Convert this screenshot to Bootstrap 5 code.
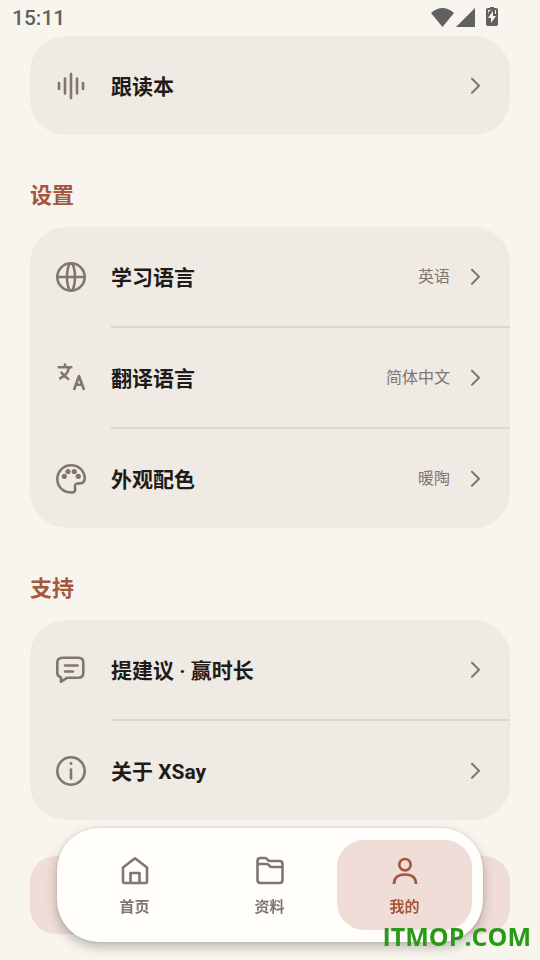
<!DOCTYPE html>
<html lang="zh-CN" class="h-100">
<head>
<meta charset="utf-8">
<meta name="viewport" content="width=device-width, initial-scale=1">
<title>XSay</title>
<link href="https://cdn.jsdelivr.net/npm/bootstrap@5.3.0/dist/css/bootstrap.min.css" rel="stylesheet">
<style>
  body {
    background: #f8f5ee;
    color: #1f1b19;
    font-family: Roboto, "Noto Sans CJK SC", sans-serif;
    padding-bottom: 26px;
  }
  svg { display: block; flex: none; }
  .line-icon { fill: none; stroke: currentColor; stroke-width: 2.6; stroke-linecap: round; stroke-linejoin: round; }
  .chevron { stroke-width: 2; }
  .status-bar { height: 36px; padding: 0 40px 0 12px; color: #616060; }
  .clock { font-size: 21px; line-height: 36px; font-weight: 500; }
  .page { padding: 0 30px; }
  .panel { background: #efeae4; border-radius: 36px; overflow: hidden; }
  .section-title { color: #a5573d; font-size: 22px; line-height: 32px; font-weight: 700; margin: 45px 0 15px; }
  .entry { height: 99px; padding: 0 30px 0 26px; color: #80756f; text-decoration: none; }
  .entry-name { margin-left: 24px; padding-top: 2px; color: #1f1b19; font-size: 21px; line-height: 32px; font-weight: 700; }
  .entry-value { font-size: 16px; line-height: 24px; padding-top: 1px; margin-right: 20px; }
  .divider { margin: 0 0 0 81px; border-top: 2px solid #ddd5cf; opacity: 1; }
  .logout { height: 78px; margin-top: 36px; border: 0; border-radius: 26px; background: #f1ddd7; }
  .tab-bar { margin: 0 57px 18px; padding: 12px 11px 12px 10px; border-radius: 42px; background: #fffefa; box-shadow: 0 5px 12px rgba(0,0,0,.26), 0 0 3px rgba(0,0,0,.12); }
  .tab { flex: 1 1 0; height: 90px; gap: 10px; padding-top: 15px; border-radius: 27px; color: #80756f; font-size: 15px; line-height: 24px; font-weight: 700; text-decoration: none; }
  .tab.active { background: #f1ddd7; color: #a5573d; }
  .watermark { position: fixed; right: 9px; bottom: 7px; z-index: 1040; color: #299a16; font: 700 25px/34px "Open Sans", sans-serif; }
</style>
<script src="https://cdn.jsdelivr.net/npm/bootstrap@5.3.0/dist/js/bootstrap.bundle.min.js"></script>
</head>
<body class="min-vh-100">
<svg class="d-none" aria-hidden="true">
  <symbol id="chevron" viewBox="0 0 10 18"><path d="M2 1.700l7 7-7 7"/></symbol>
</svg>

<header class="status-bar d-flex align-items-center justify-content-between">
  <span class="clock">15:11</span>
  <svg width="70" height="36" viewBox="0 0 70 36" fill="currentColor" aria-hidden="true">
    <path d="M1 13Q12.500 3 24 13L12.500 27Z"/>
    <path d="M45 8V27H26Z"/>
    <path fill-rule="evenodd" d="M58 8h2V7h4v1h2q2 0 2 2v14q0 2-2 2h-8q-2 0-2-2V10q0-2 2-2zM63 11l-5 7h3v5l5-7h-3zM58 10v4l1-3 3-1zM65 10v4h1v-4z"/>
  </svg>
</header>

<main class="page">
  <section class="panel">
    <a class="entry d-flex align-items-center" href="#">
      <svg class="line-icon" width="31" height="31" viewBox="0 0 31 31"><path d="M3 13v6M9 8.500v15M15 4v24M21 8.500v15M27 13v6"/></svg>
      <span class="entry-name me-auto">跟读本</span>
      <svg class="line-icon chevron" width="10" height="18"><use href="#chevron"/></svg>
    </a>
  </section>

  <h2 class="section-title">设置</h2>
  <section class="panel">
    <a class="entry d-flex align-items-center" href="#">
      <svg class="line-icon" width="31" height="31" viewBox="0 0 31 31"><circle cx="15" cy="16" r="13.700"/><ellipse cx="15" cy="16" rx="4" ry="13.700"/><path d="M1.500 16h27"/></svg>
      <span class="entry-name me-auto">学习语言</span>
      <span class="entry-value">英语</span>
      <svg class="line-icon chevron" width="10" height="18"><use href="#chevron"/></svg>
    </a>
    <hr class="divider">
    <a class="entry d-flex align-items-center" href="#">
      <svg class="line-icon" width="31" height="31" viewBox="0 0 31 31"><path d="M2.700 5.300h12.600M9 2.500v2.800M13 5.800C12 10.500 8.500 14.500 4.200 16.300M5.500 10.700c2 2.500 4 4.500 6.800 6.300M18.300 27l4.700-13 4.700 13M20 22.800h6"/></svg>
      <span class="entry-name me-auto">翻译语言</span>
      <span class="entry-value">简体中文</span>
      <svg class="line-icon chevron" width="10" height="18"><use href="#chevron"/></svg>
    </a>
    <hr class="divider">
    <a class="entry d-flex align-items-center" href="#">
      <svg class="line-icon" width="31" height="31" viewBox="0 0 31 31"><path d="M15 2.300C7.400 2.300 1.300 8.400 1.300 16c0 7.500 5.500 13.500 14.700 13.500 2.500 0 3.600-1.600 3.100-4.200-.7-3.800.1-4.800 3.900-4.900 3.800 0 5.700-1.300 5.700-5C28.700 8 23 2.300 15 2.300z"/><g fill="currentColor" stroke="none"><circle cx="8.300" cy="13.300" r="2.600"/><circle cx="12" cy="8.500" r="2.600"/><circle cx="18.300" cy="8.500" r="2.600"/><circle cx="22.300" cy="13.300" r="2.600"/></g></svg>
      <span class="entry-name me-auto">外观配色</span>
      <span class="entry-value">暖陶</span>
      <svg class="line-icon chevron" width="10" height="18"><use href="#chevron"/></svg>
    </a>
  </section>

  <h2 class="section-title">支持</h2>
  <section class="panel">
    <a class="entry d-flex align-items-center" href="#">
      <svg class="line-icon" width="31" height="31" viewBox="0 0 31 31"><path d="M6.500 3.800h15.800q5 0 5 5v9.900q0 5-5 5H11.500L5 27.700V23.500Q1.300 22.300 1.300 18.500V8.800q0-5 5.200-5zM9 11.500h12.500M9 17.500h8"/></svg>
      <span class="entry-name me-auto">提建议 · 赢时长</span>
      <svg class="line-icon chevron" width="10" height="18"><use href="#chevron"/></svg>
    </a>
    <hr class="divider">
    <a class="entry d-flex align-items-center" href="#">
      <svg class="line-icon" width="31" height="31" viewBox="0 0 31 31"><circle cx="15" cy="16" r="13.700"/><path d="M15 14.500v9"/><circle cx="15" cy="8.500" r="1.400" fill="currentColor" stroke="none"/></svg>
      <span class="entry-name me-auto">关于 XSay</span>
      <svg class="line-icon chevron" width="10" height="18"><use href="#chevron"/></svg>
    </a>
  </section>

  <button class="logout d-block w-100" type="button"></button>
</main>

<nav class="tab-bar fixed-bottom d-flex">
  <a class="tab d-flex flex-column align-items-center" href="#">
    <svg class="line-icon" width="30" height="30" viewBox="0 0 30 30"><path d="M3 12.500L15 3.300l12 9.200V26.500q0 1.500-1.500 1.500h-21Q3 28 3 26.500zM10.500 28V18h9v10"/></svg>
    <span>首页</span>
  </a>
  <a class="tab d-flex flex-column align-items-center" href="#">
    <svg class="line-icon" width="30" height="30" viewBox="0 0 30 30"><path d="M2.500 25V6Q2.500 3 5.500 3H10q1.500 0 2.300 1.300Q13.200 6 15 6h9.500q3 0 3 3v16q0 3-3 3h-19q-3 0-3-3zM2.500 9H12q1.200 0 2 1.300Q15 12 16.500 12h11"/></svg>
    <span>资料</span>
  </a>
  <a class="tab active d-flex flex-column align-items-center" href="#" aria-current="page">
    <svg class="line-icon" width="30" height="30" viewBox="0 0 30 30"><circle cx="15" cy="9.700" r="5.700"/><path stroke-linecap="butt" d="M4 29Q4 19.500 15 19.500T26 29"/></svg>
    <span>我的</span>
  </a>
</nav>
<div class="watermark">ITMOP.COM</div>
</body>
</html>
